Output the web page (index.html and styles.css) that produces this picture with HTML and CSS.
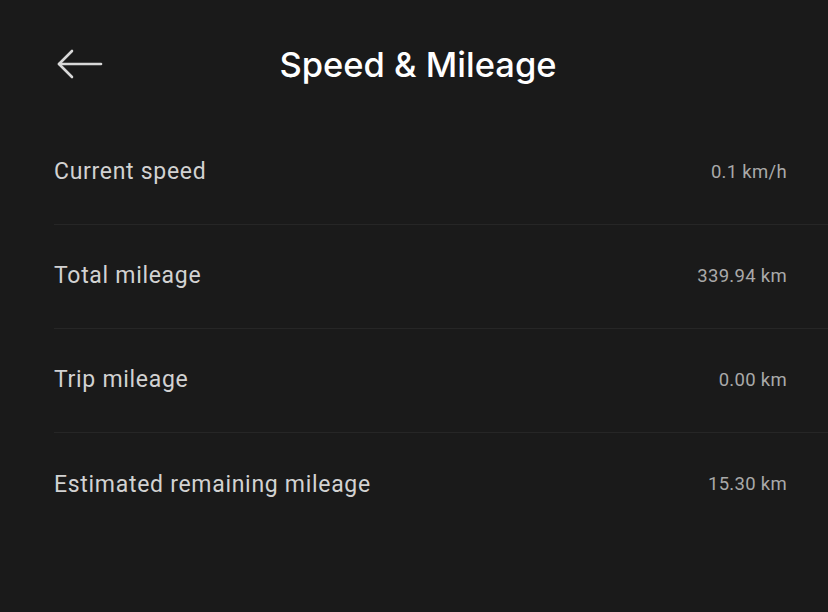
FILE: index.html
```html
<!DOCTYPE html>
<html>
<head>
<meta charset="utf-8">
<link rel="stylesheet" href="styles.css">
</head>
<body>
<div class="page">
  <header class="header">
    <button class="back" aria-label="Back">
      <svg width="46" height="30" viewBox="0 0 46 30" fill="none" stroke="#d8d8d8" stroke-width="2.6" stroke-linecap="round" stroke-linejoin="round">
        <path d="M2 15 H44"/>
        <path d="M15 2 L2 15 L15 28"/>
      </svg>
    </button>
    <h1 class="title">Speed &amp; Mileage</h1>
  </header>
  <ul class="list">
    <li class="row"><span class="label">Current speed</span><span class="value">0.1 km/h</span></li>
    <li class="row"><span class="label">Total mileage</span><span class="value">339.94 km</span></li>
    <li class="row"><span class="label">Trip mileage</span><span class="value">0.00 km</span></li>
    <li class="row"><span class="label">Estimated remaining mileage</span><span class="value">15.30 km</span></li>
  </ul>
</div>
</body>
</html>
```
FILE: styles.css
```css
html, body {
  margin: 0;
  padding: 0;
  background: #1a1a1a;
  height: 100%;
}
.page {
  width: 828px;
  height: 612px;
  background: #1a1a1a;
  font-family: Roboto, "Noto Sans", sans-serif;
  overflow: hidden;
}
.header {
  position: relative;
  height: 121px;
  display: flex;
  align-items: center;
  justify-content: center;
  box-sizing: border-box;
}
.back {
  position: absolute;
  left: 57px;
  top: 49px;
  background: none;
  border: 0;
  padding: 0;
  display: flex;
}
.title {
  margin: 0 0 0 8px;
  position: relative;
  top: 4px;
  color: #ffffff;
  font-family: Inter, "Noto Sans", sans-serif;
  font-weight: 500;
  font-size: 34.5px;
}
.list {
  list-style: none;
  margin: 0;
  padding: 0 0 0 54px;
}
.row {
  height: 104px;
  box-sizing: border-box;
  display: flex;
  align-items: center;
  justify-content: space-between;
  padding-right: 41px;
  padding-bottom: 2px;
  border-bottom: 1px solid #262626;
}
.row:last-child {
  border-bottom: 0;
}
.label {
  color: #d2d2d2;
  font-size: 23px;
  letter-spacing: 0.7px;
}
.value {
  color: #a9a9a9;
  font-size: 18.5px;
  letter-spacing: 0.3px;
}
```
